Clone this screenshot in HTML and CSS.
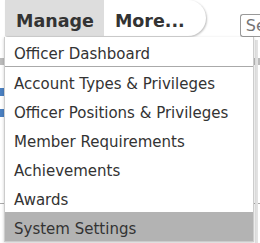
FILE: index.html
```html
<!DOCTYPE html>
<html>
<head>
<meta charset="utf-8">
<link rel="stylesheet" href="styles.css">
</head>
<body>
<div class="page">
  <div class="topbar">
    <nav class="nav">
      <a class="tab tab-active">Manage</a>
      <a class="tab tab-last">More...</a>
    </nav>
    <input class="search" type="text" placeholder="Search">
  </div>
  <div class="content">
    <div class="band"></div>
    <div class="rows">
      <div class="row"><span class="ico"></span></div>
      <div class="row"><span class="ico"></span></div>
    </div>
    <div class="rule"></div>
  </div>
  <div class="scroll"></div>

  <ul class="menu">
    <li class="item item-first">Officer Dashboard</li>
    <li class="item">Account Types &amp; Privileges</li>
    <li class="item">Officer Positions &amp; Privileges</li>
    <li class="item">Member Requirements</li>
    <li class="item">Achievements</li>
    <li class="item">Awards</li>
    <li class="item item-hover">System Settings</li>
  </ul>
</div>
</body>
</html>
```
FILE: styles.css
```css
html, body {
  margin: 0;
  padding: 0;
  background: #fff;
  overflow: hidden;
}
.page {
  position: relative;
  width: 260px;
  height: 243px;
  overflow: hidden;
  font-family: "DejaVu Sans", Verdana, sans-serif;
}
.topbar {
  display: flex;
  align-items: flex-start;
  height: 37px;
  padding-left: 5px;
}
.nav {
  display: flex;
  height: 36px;
  background: #fff;
  border-radius: 0 18px 18px 0;
  box-shadow: 1px 1px 2px rgba(0,0,0,0.25);
}
.tab {
  display: flex;
  align-items: center;
  padding: 6px 10px 0 11px;
  font-size: 17.5px;
  font-weight: bold;
  color: #333;
}
.tab-active {
  background: #ddd;
}
.tab-last {
  padding-right: 21px;
}
.search {
  margin-left: 34px;
  margin-top: 14px;
  width: 22px;
  height: 23px;
  box-sizing: border-box;
  border: 1px solid #999;
  border-right: 0;
  border-radius: 3px 0 0 3px;
  padding: 0 0 0 5px;
  font-family: "DejaVu Sans", Verdana, sans-serif;
  font-size: 16px;
  color: #777;
}
.content {
  display: flex;
  flex-direction: column;
}
.band {
  margin-top: 21px;
  height: 7px;
  background: #bbb;
}
.rows {
  display: flex;
  flex-direction: column;
  gap: 13px;
  margin-top: 23px;
}
.row {
  height: 8px;
}
.ico {
  display: block;
  width: 4px;
  height: 8px;
  background: #4a7fc0;
}
.rule {
  margin-top: 86px;
  height: 1px;
  background: #aaa;
}
.scroll {
  position: absolute;
  left: 255px;
  top: 40px;
  width: 3px;
  height: 203px;
  background: #e2e2e2;
}
.menu {
  position: absolute;
  left: 4px;
  top: 37px;
  width: 250px;
  box-sizing: border-box;
  margin: 0;
  padding: 0;
  list-style: none;
  background: #fff;
  border: 1px solid #ccc;
  border-top: 0;
  box-shadow: 0 1px 3px rgba(0,0,0,0.2);
}
.item {
  height: 29px;
  box-sizing: border-box;
  display: flex;
  align-items: center;
  padding: 4px 0 0 9px;
  font-size: 15px;
  color: #333;
  white-space: nowrap;
}
.item-first {
  height: 30px;
  border-bottom: 1px solid #aaa;
}
.item-hover {
  background: #b3b3b3;
}
```
